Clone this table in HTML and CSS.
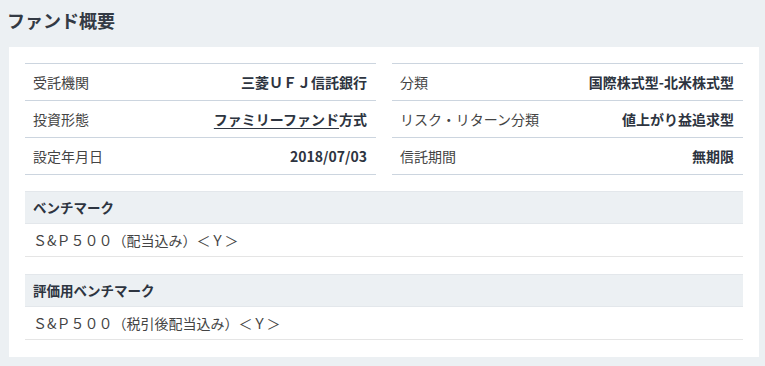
FILE: index.html
```html
<!DOCTYPE html>
<html lang="ja">
<head>
<meta charset="utf-8">
<link rel="stylesheet" href="styles.css">
</head>
<body>
<h2 class="title">ファンド概要</h2>
<div class="card">
  <div class="grid">
    <table class="info">
      <tr><th>受託機関</th><td>三菱ＵＦＪ信託銀行</td></tr>
      <tr><th>投資形態</th><td><a href="#">ファミリーファンド</a>方式</td></tr>
      <tr><th>設定年月日</th><td>2018/07/03</td></tr>
    </table>
    <table class="info">
      <tr><th>分類</th><td>国際株式型-北米株式型</td></tr>
      <tr><th>リスク・リターン分類</th><td>値上がり益追求型</td></tr>
      <tr><th>信託期間</th><td>無期限</td></tr>
    </table>
  </div>
  <div class="bench">
    <div class="bench-head">ベンチマーク</div>
    <div class="bench-body">Ｓ&amp;Ｐ５００（配当込み）＜Ｙ＞</div>
  </div>
  <div class="bench">
    <div class="bench-head">評価用ベンチマーク</div>
    <div class="bench-body">Ｓ&amp;Ｐ５００（税引後配当込み）＜Ｙ＞</div>
  </div>
</div>
</body>
</html>
```
FILE: styles.css
```css
html, body {
  margin: 0;
  padding: 0;
  background: #ecf0f3;
}
body {
  padding: 0 6px 9px 9px;
  font-family: "Noto Sans CJK JP", "Noto Sans", sans-serif;
  color: #333;
}
.title {
  margin: 0 0 0 -2px;
  height: 47px;
  line-height: 40px;
  font-size: 18px;
  font-weight: 700;
  color: #333a44;
}
.card {
  background: #fff;
  padding: 16px 16px 17px 16px;
  display: flex;
  flex-direction: column;
  gap: 16px;
}
.grid {
  display: grid;
  grid-template-columns: 1fr 1fr;
  gap: 16px;
}
.info {
  width: 100%;
  border-collapse: collapse;
  border-top: 1px solid #ccd5df;
  font-size: 14px;
}
.info tr {
  border-bottom: 1px solid #ccd5df;
}
.info th, .info td {
  height: 36px;
  padding: 0 8px;
  white-space: nowrap;
}
.info th {
  text-align: left;
  font-weight: 400;
  color: #444;
}
.info td {
  text-align: right;
  font-weight: 700;
  color: #2d3440;
  padding-right: 9px;
}
.info td a {
  color: #2d3440;
  text-decoration: underline;
  text-underline-offset: 3px;
}
.bench {
  font-size: 14px;
}
.bench-head {
  background: #ecf0f3;
  border-top: 1px solid #e3e7eb;
  border-bottom: 1px solid #e3e7eb;
  height: 31px;
  line-height: 31px;
  padding: 0 8px;
  font-weight: 700;
  font-size: 13.5px;
  color: #2d3440;
}
.bench-body {
  height: 32px;
  line-height: 32px;
  padding: 0 8px;
  border-bottom: 1px solid #e5e5e5;
  color: #444;
}
.bench + .bench {
  margin-top: 1px;
}
```
